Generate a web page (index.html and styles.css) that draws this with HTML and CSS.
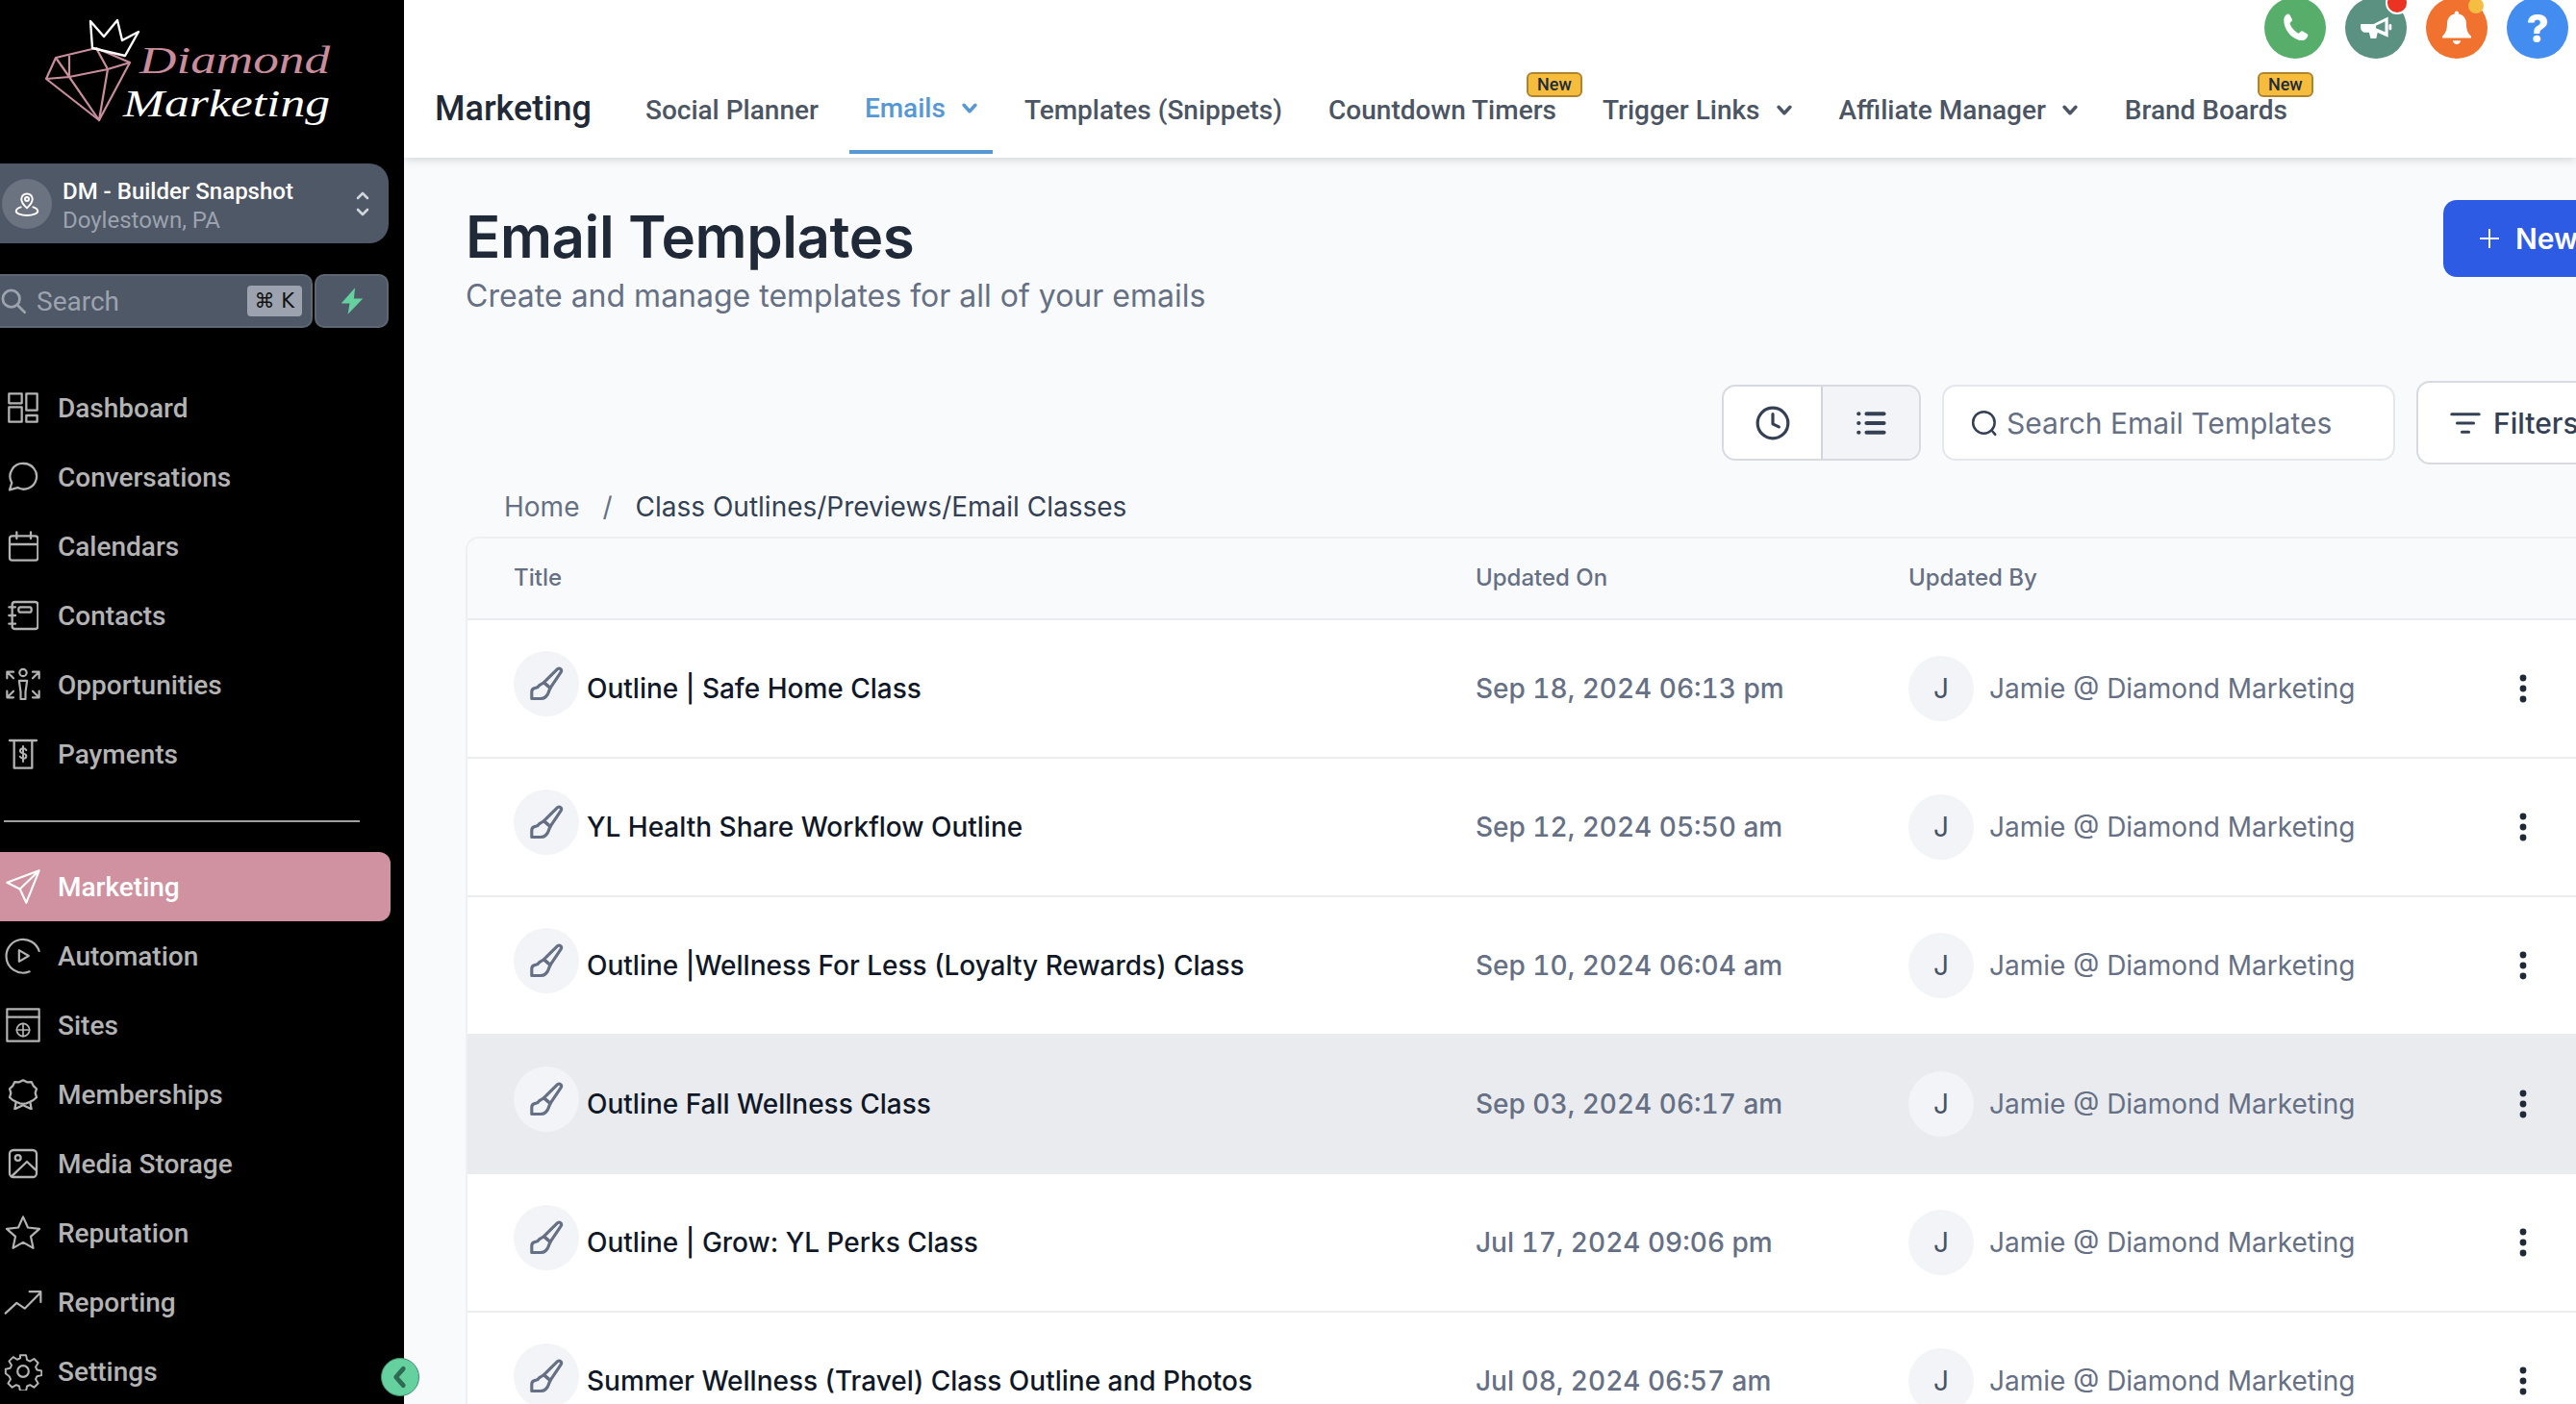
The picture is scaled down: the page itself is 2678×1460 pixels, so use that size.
FILE: index.html
```html
<!DOCTYPE html>
<html lang="en">
<head>
  <meta charset="UTF-8" />
  <meta name="viewport" content="width=device-width, initial-scale=1.0"/>
  <title>Email Templates</title>
  <link rel="stylesheet" href="styles.css">
</head>
<body>

<svg class="icon-defs">
  <symbol id="brush" viewBox="0 0 24 24" fill="none" stroke="currentColor" stroke-width="2" stroke-linejoin="round" stroke-linecap="round">
    <path d="M19.5 2.2c1.2-.8 2.9.6 2.2 2L14.6 14.8l-4.2-3.6z"/>
    <path d="M10.4 11.2l4.2 3.6-1 2.4c-.8 2.6-2.8 4.6-5.4 4.6H2.4v-4.4c0-1.4 1-2.4 2.4-2.6 1.2-.2 2-.8 2.6-1.8z"/>
  </symbol>
  <symbol id="dots" viewBox="0 0 8 30" fill="currentColor">
    <circle cx="4" cy="4" r="3.4"/><circle cx="4" cy="15" r="3.4"/><circle cx="4" cy="26" r="3.4"/>
  </symbol>
  <symbol id="chev" viewBox="0 0 16 12" fill="none" stroke="currentColor" stroke-width="3.2" stroke-linecap="round" stroke-linejoin="round">
    <path d="M2.5 3l5.5 6 5.5-6"/>
  </symbol>
</svg>

<aside class="sidebar">
  <div class="logo-wrapper">
    <svg class="logo" viewBox="0 0 300 112" width="300" height="112">
      <g fill="none" stroke="#c98d9c" stroke-width="2.2" stroke-linejoin="round">
        <path d="M1 62L11 40 53 30 88 45 56 105z"/>
        <path d="M1 62L25 60 65 52 88 45M11 40L25 60 56 105 65 52 53 30M25 38V60"/>
      </g>
      <path d="M49 30L47 2 61 18 75 1 80 22 97 13 83 38z" fill="none" stroke="#fff" stroke-width="2.4" stroke-linejoin="round"/>
      <text class="logo-top" x="98" y="56" textLength="198" lengthAdjust="spacingAndGlyphs">Diamond</text>
      <text class="logo-bottom" x="81" y="101" textLength="215" lengthAdjust="spacingAndGlyphs">Marketing</text>
    </svg>
  </div>

  <div class="location">
    <div class="location-avatar">
      <svg viewBox="0 0 24 24" width="30" height="30" fill="none" stroke="#fff" stroke-width="1.6" stroke-linejoin="round">
        <path d="M12 15.5c-3-2.8-4.6-5-4.6-7.400a4.600 4.600 0 0 1 9.200 0c0 2.400-1.600 4.600-4.600 7.400z"/>
        <circle cx="12" cy="8" r="1.600"/>
        <path d="M7.500 14.500c-2.600.8-4.500 2-4.500 3.500 0 2 4 3.500 9 3.500s9-1.500 9-3.500c0-1.500-1.900-2.700-4.500-3.500"/>
      </svg>
    </div>
    <div class="location-text">
      <div class="location-name">DM - Builder Snapshot</div>
      <div class="location-city">Doylestown, PA</div>
    </div>
    <svg class="location-arrows" viewBox="0 0 14 28" width="14" height="28" fill="none" stroke="#d1d5db" stroke-width="2.600" stroke-linecap="round" stroke-linejoin="round">
      <path d="M2 8l5-5 5 5M2 20l5 5 5-5"/>
    </svg>
  </div>

  <div class="search-row">
    <div class="side-search">
      <svg viewBox="0 0 24 24" width="28" height="28" fill="none" stroke="#9ca3af" stroke-width="2.400" stroke-linecap="round">
        <circle cx="10" cy="10" r="7.500"/><path d="M16 16l6 6"/>
      </svg>
      <span class="side-search-text">Search</span>
      <span class="kbd">⌘ K</span>
    </div>
    <div class="bolt-btn">
      <svg viewBox="0 0 24 24" width="30" height="30"><path d="M14.500 1L3 14h7l-1.500 9L21 10h-7.500z" fill="#65d19f"/></svg>
    </div>
  </div>

  <nav class="side-nav">
    <a class="nav-item">
      <svg viewBox="0 0 24 24"><rect x="1" y="1" width="10" height="7.500"/><rect x="14.500" y="1" width="8.500" height="13"/><rect x="1" y="11.500" width="10" height="11.500"/><rect x="14.500" y="18" width="8.500" height="5"/></svg>
      Dashboard
    </a>
    <a class="nav-item">
      <svg viewBox="0 0 24 24"><path d="M12.500 1.500a10 10 0 1 1-4.700 18.800L1.500 22l1.700-5.500A10 10 0 0 1 12.500 1.500z"/></svg>
      Conversations
    </a>
    <a class="nav-item">
      <svg viewBox="0 0 24 24"><rect x="1.500" y="4" width="22" height="19" rx="2"/><path d="M1.500 10.500h22M7 1v5M18 1v5"/></svg>
      Calendars
    </a>
    <a class="nav-item">
      <svg viewBox="0 0 24 24"><rect x="3.500" y="1.500" width="20" height="21" rx="2"/><rect x="8.500" y="5.500" width="10" height="4" rx="1.500"/><path d="M1 5.500h5M1 12h5M1 18.500h5"/></svg>
      Contacts
    </a>
    <a class="nav-item">
      <svg class="wide" viewBox="0 0 24 24"><circle cx="12" cy="4.500" r="2.200"/><path d="M9.500 9.500h5l-1 7v4.500h-3v-4.500z"/><path d="M2 4h4M2 4v4M2 4l4 4M22 4h-4M22 4v4M22 4l-4 4M2 20h4M2 20v-4M2 20l4-4M22 20h-4M22 20v-4M22 20l-4-4"/></svg>
      Opportunities
    </a>
    <a class="nav-item">
      <svg viewBox="0 0 24 24"><path d="M1.500 1.500h21M5 1.500V23h14V1.500"/><path d="M14.500 9c-.5-1-1.400-1.400-2.400-1.400-1.300 0-2.400.7-2.400 1.900 0 2.700 4.800 1.300 4.800 4.100 0 1.300-1.100 1.900-2.400 1.900-1 0-1.900-.5-2.500-1.400M12 6v12" stroke-width="1.500"/></svg>
      Payments
    </a>

    <div class="nav-divider"></div>

    <a class="nav-item active">
      <svg class="wide" viewBox="0 0 24 24"><path d="M22 2L2 9.500l8 4 4 8.500zM22 2L10 13.500"/></svg>
      Marketing
    </a>
    <a class="nav-item">
      <svg class="wide" viewBox="0 0 24 24"><path d="M22 9A10.500 10.500 0 0 0 1.500 12a10.500 10.500 0 0 0 14.500 9.800"/><path d="M9.500 8.500v7l6-3.500z"/></svg>
      Automation
    </a>
    <a class="nav-item">
      <svg class="wide" viewBox="0 0 24 24"><rect x="2" y="2" width="20" height="20"/><path d="M2 7h20"/><circle cx="12" cy="15" r="4" stroke-width="1"/><path d="M8 15h8M12 11v8" stroke-width="1"/></svg>
      Sites
    </a>
    <a class="nav-item">
      <svg viewBox="0 0 24 24"><path d="M12 1l3 1.500 3.500-.2 1.500 3 2.500 2.400-1 3.300 1 3.300-2.500 2.200-3 1.500-2.500 1-2.500.4-2.500-.4-2.500-1-3-1.500L1.500 14.300l1-3.300-1-3.300L4 5.300l1.500-3 3.500.2z"/><path d="M6.500 18l-1 5.500L12 20.500l6.500 3-1-5.500"/></svg>
      Memberships
    </a>
    <a class="nav-item">
      <svg viewBox="0 0 24 24"><rect x="1.500" y="1.500" width="21" height="21" rx="3"/><circle cx="8" cy="7.500" r="2.200"/><path d="M3 22L15 10.500l7.500 7"/></svg>
      Media Storage
    </a>
    <a class="nav-item">
      <svg class="wide" viewBox="0 0 24 24"><path d="M12 2l3 6.700 7.200.8-5.400 4.800 1.500 7.200-6.300-3.600-6.300 3.600 1.500-7.200-5.400-4.800 7.200-.8z"/></svg>
      Reputation
    </a>
    <a class="nav-item">
      <svg class="wide" viewBox="0 0 24 24"><path d="M1 19l7-6.500 5 3.500 10-10M16 5.500h7V12"/></svg>
      Reporting
    </a>
    <a class="nav-item">
      <svg class="wide" viewBox="0 0 24 24"><circle cx="12" cy="12" r="3.500"/><path d="M10 1h4l.7 3.200 2 .9 2.800-1.700 2.800 2.800-1.700 2.800.9 2 3.200.7v3l-3.200.7-.9 2 1.700 2.800-2.800 2.800-2.800-1.700-2 .9-.7 3.200h-4l-.7-3.200-2-.9-2.800 1.700-2.800-2.800 1.700-2.800-.9-2L0 13.500v-3l3.200-.7.900-2-1.700-2.800 2.800-2.800 2.800 1.700 2-.9z" transform="translate(1.100 1.100) scale(.91)"/></svg>
      Settings
    </a>
  </nav>

  <div class="collapse-btn">
    <svg viewBox="0 0 24 24" width="26" height="26" fill="none" stroke="#2f6b52" stroke-width="4.400" stroke-linecap="round" stroke-linejoin="round"><path d="M15 4l-7 8 7 8"/></svg>
  </div>
</aside>

<main class="main">
  <header class="topbar">
    <div class="quick-actions">
      <div class="circle-btn green">
        <svg viewBox="0 0 24 24" width="36" height="36"><path d="M6.500 2.500c.6-.3 1.300-.2 1.700.4l1.600 3c.3.500.2 1.200-.3 1.600L8.300 8.700c.8 2.900 3.300 5.800 6.200 7.200l1.300-1.300c.4-.4 1-.5 1.500-.2l3 1.700c.6.300.8 1 .5 1.600-.8 1.800-2 3-3.700 3C10.700 20.700 4 13.800 4.200 6.300c0-1.700 1-3 2.300-3.800z" fill="#fff"/></svg>
      </div>
      <div class="circle-btn teal">
        <svg viewBox="0 0 24 24" width="38" height="38" fill="#fff"><path d="M2 9.500h8.500L20 4.800v13.400l-7-3.200v.5l-.8 3.500H8.500l-1-4H5.200C3.400 15 2 13.600 2 11.800z"/><rect x="20.500" y="9.500" width="1.800" height="4" rx=".9"/><path d="M12 10.500l6-2.800v7l-6-2.500z" fill="#5b9180"/></svg>
        <span class="dot-red"></span>
      </div>
      <div class="circle-btn orange">
        <svg viewBox="0 0 24 24" width="40" height="40" fill="#fff"><path d="M12 1.500c.8 0 1.300.6 1.300 1.400v.4c3 .6 4.700 3 4.700 6 0 4 1 6 3 8v1H3v-1c2-2 3-4 3-8 0-3 1.700-5.400 4.700-6v-.4c0-.8.500-1.400 1.300-1.400z"/><path d="M9.500 20h5c-.2 1.300-1.200 2.200-2.500 2.200s-2.300-.9-2.500-2.200z"/></svg>
        <span class="dot-yellow"></span>
      </div>
      <div class="circle-btn blue">?</div>
    </div>

    <div class="subnav">
      <span class="section-title">Marketing</span>
      <a class="tab">Social Planner</a>
      <a class="tab tab-active">Emails <svg class="tab-chev"><use href="#chev"/></svg></a>
      <a class="tab">Templates (Snippets)</a>
      <a class="tab">Countdown Timers <span class="new-badge">New</span></a>
      <a class="tab">Trigger Links <svg class="tab-chev"><use href="#chev"/></svg></a>
      <a class="tab">Affiliate Manager <svg class="tab-chev"><use href="#chev"/></svg></a>
      <a class="tab">Brand Boards <span class="new-badge">New</span></a>
    </div>
  </header>

  <section class="content">
    <div class="page-header">
      <div class="page-heading">
        <h1>Email Templates</h1>
        <p class="page-sub">Create and manage templates for all of your emails</p>
      </div>
      <button class="new-btn">
        <svg viewBox="0 0 24 24" width="24" height="24" fill="none" stroke="#fff" stroke-width="2"><path d="M12 2v20M2 12h20"/></svg>
        New
      </button>
    </div>

    <div class="toolbar">
      <div class="view-toggle">
        <div class="view-btn">
          <svg viewBox="0 0 24 24" width="38" height="38" fill="none" stroke="#344054" stroke-width="2" stroke-linecap="round" stroke-linejoin="round"><circle cx="12" cy="12" r="10"/><path d="M12 6v6.500l4 2"/></svg>
        </div>
        <div class="view-btn selected">
          <svg viewBox="0 0 24 24" width="36" height="36" fill="none" stroke="#344054" stroke-width="2.800" stroke-linecap="round"><path d="M9 5.500h12M9 12h12M9 18.500h12M3.500 5.500h.1M3.500 12h.1M3.500 18.500h.1"/></svg>
        </div>
      </div>
      <div class="template-search">
        <svg viewBox="0 0 24 24" width="30" height="30" fill="none" stroke="#344054" stroke-width="2" stroke-linecap="round"><circle cx="11.500" cy="11.500" r="9"/><path d="M18 18l3 3.500"/></svg>
        <span>Search Email Templates</span>
      </div>
      <div class="filter-btn">
        <svg viewBox="0 0 24 24" width="34" height="34" fill="none" stroke="#344054" stroke-width="2.200" stroke-linecap="round"><path d="M2 5.500h20M6 12h12M9.500 18.500h5"/></svg>
        <span>Filters</span>
      </div>
    </div>

    <div class="breadcrumb">
      <span class="crumb-home">Home</span>
      <span class="crumb-sep">/</span>
      <span class="crumb-current">Class Outlines/Previews/Email Classes</span>
    </div>

    <div class="card">
      <div class="row head">
        <div>Title</div>
        <div>Updated On</div>
        <div>Updated By</div>
      </div>

      <div class="row">
        <div class="title-cell"><span class="brush"><svg><use href="#brush"/></svg></span><span class="name">Outline | Safe Home Class</span></div>
        <div class="date">Sep 18, 2024 06:13 pm</div>
        <div class="author"><span class="initial">J</span><span class="author-name">Jamie @ Diamond Marketing</span><svg class="more"><use href="#dots"/></svg></div>
      </div>
      <div class="row">
        <div class="title-cell"><span class="brush"><svg><use href="#brush"/></svg></span><span class="name">YL Health Share Workflow Outline</span></div>
        <div class="date">Sep 12, 2024 05:50 am</div>
        <div class="author"><span class="initial">J</span><span class="author-name">Jamie @ Diamond Marketing</span><svg class="more"><use href="#dots"/></svg></div>
      </div>
      <div class="row">
        <div class="title-cell"><span class="brush"><svg><use href="#brush"/></svg></span><span class="name">Outline |Wellness For Less (Loyalty Rewards) Class</span></div>
        <div class="date">Sep 10, 2024 06:04 am</div>
        <div class="author"><span class="initial">J</span><span class="author-name">Jamie @ Diamond Marketing</span><svg class="more"><use href="#dots"/></svg></div>
      </div>
      <div class="row hovered">
        <div class="title-cell"><span class="brush"><svg><use href="#brush"/></svg></span><span class="name">Outline Fall Wellness Class</span></div>
        <div class="date">Sep 03, 2024 06:17 am</div>
        <div class="author"><span class="initial">J</span><span class="author-name">Jamie @ Diamond Marketing</span><svg class="more"><use href="#dots"/></svg></div>
      </div>
      <div class="row">
        <div class="title-cell"><span class="brush"><svg><use href="#brush"/></svg></span><span class="name">Outline | Grow: YL Perks Class</span></div>
        <div class="date">Jul 17, 2024 09:06 pm</div>
        <div class="author"><span class="initial">J</span><span class="author-name">Jamie @ Diamond Marketing</span><svg class="more"><use href="#dots"/></svg></div>
      </div>
      <div class="row">
        <div class="title-cell"><span class="brush"><svg><use href="#brush"/></svg></span><span class="name">Summer Wellness (Travel) Class Outline and Photos</span></div>
        <div class="date">Jul 08, 2024 06:57 am</div>
        <div class="author"><span class="initial">J</span><span class="author-name">Jamie @ Diamond Marketing</span><svg class="more"><use href="#dots"/></svg></div>
      </div>
    </div>
  </section>
</main>

</body>
</html>
```

FILE: styles.css
```css
* { box-sizing: border-box; }
html, body { height: 100%; }
body {
  margin: 0;
  display: flex;
  height: 1460px;
  overflow: hidden;
  background: #f9fafb;
  font-family: Inter, sans-serif;
}
.icon-defs { display: none; }

/* sidebar */
.sidebar {
  position: relative;
  flex: 0 0 420px;
  width: 420px;
  background: #000;
  font-family: Roboto, sans-serif;
}
.logo-wrapper { height: 170px; padding: 20px 0 0 47px; }
.logo { display: block; }
.logo-top, .logo-bottom {
  font-family: "Liberation Serif", serif;
  font-style: italic;
  font-size: 41px;
}
.logo-top { fill: #c98d9c; }
.logo-bottom { fill: #fff; }

.location {
  display: flex;
  align-items: center;
  width: 404px;
  height: 83px;
  padding: 0 20px 0 2px;
  background: #4f5866;
  border-radius: 0 20px 20px 0;
}
.location-avatar {
  display: flex;
  align-items: center;
  justify-content: center;
  width: 52px;
  height: 52px;
  border-radius: 50%;
  background: #6b7280;
}
.location-text { flex: 1; margin-left: 11px; padding-top: 4px; font-size: 24px; line-height: 30px; }
.location-name { color: #fff; font-weight: 500; }
.location-city { color: #9ca3af; }

.search-row { display: flex; gap: 2px; width: 404px; margin-top: 32px; }
.side-search {
  display: flex;
  align-items: center;
  flex: 1;
  height: 56px;
  padding: 0 9px 0 0;
  background: #4f5866;
  border: 2px solid #5d6673;
  border-left: 0;
  border-radius: 0 10px 10px 0;
}
.side-search-text { flex: 1; margin-left: 10px; font-size: 28px; color: #9ca3af; }
.kbd {
  padding: 0 8px;
  height: 32px;
  line-height: 32px;
  border-radius: 4px;
  background: #9ca3af;
  color: #111;
  font-family: "DejaVu Sans", sans-serif;
  font-size: 21px;
}
.bolt-btn {
  display: flex;
  align-items: center;
  justify-content: center;
  width: 77px;
  height: 56px;
  background: #4f5866;
  border: 2px solid #5d6673;
  border-radius: 10px;
}

.side-nav { margin-top: 47px; }
.nav-item {
  display: flex;
  align-items: center;
  gap: 20px;
  height: 72px;
  padding-left: 8px;
  color: #b3b3b3;
  font-size: 28px;
  font-weight: 500;
}
.nav-item svg {
  flex: none;
  width: 32px;
  height: 32px;
  fill: none;
  stroke: currentColor;
  stroke-width: 1.7;
  stroke-linecap: round;
  stroke-linejoin: round;
}
.nav-item svg.wide {
  width: 40px;
  height: 40px;
  margin: 0 -4px;
  stroke-width: 1.3;
}
.nav-item.active {
  width: 406px;
  background: #d092a1;
  border-radius: 0 12px 12px 0;
  color: #fff;
}
.nav-divider { width: 370px; height: 2px; margin: 33px 0 31px 4px; background: #a0a0a0; }

.collapse-btn {
  position: absolute;
  left: 396px;
  top: 1412px;
  display: flex;
  align-items: center;
  justify-content: center;
  width: 40px;
  height: 40px;
  border-radius: 50%;
  background: #65d19f;
  border: 1px solid #3f8f6c;
}

/* top bar */
.main { flex: 1; min-width: 0; overflow: hidden; }
.topbar {
  height: 164px;
  background: #fff;
  box-shadow: 0 2px 9px rgba(70, 85, 100, .22);
  position: relative;
}
.quick-actions {
  display: flex;
  justify-content: flex-end;
  gap: 20px;
  height: 61px;
  padding-right: 8px;
  transform: translateY(-3px);
}
.circle-btn {
  position: relative;
  display: flex;
  align-items: center;
  justify-content: center;
  width: 64px;
  height: 64px;
  border-radius: 50%;
  color: #fff;
  font-size: 40px;
  font-weight: 800;
}
.green { background: #57ae6b; }
.teal { background: #5b9180; }
.orange { background: #f0722e; }
.blue { background: #438cf0; }
.dot-red {
  position: absolute;
  left: 42px;
  top: -6px;
  width: 24px;
  height: 24px;
  border-radius: 50%;
  background: #ea3323;
  border: 2px solid #fff;
}
.dot-yellow {
  position: absolute;
  left: 44px;
  top: 1px;
  width: 16px;
  height: 16px;
  border-radius: 50%;
  background: #f5bd41;
}

.subnav {
  display: flex;
  align-items: center;
  height: 103px;
  padding: 0 0 0 32px;
  font-family: Roboto, sans-serif;
}
.section-title {
  margin-right: 56px;
  color: #1f2937;
  font-size: 36px;
  font-weight: 500;
  line-height: 40px;
}
.tab {
  position: relative;
  display: flex;
  align-items: center;
  gap: 16px;
  margin: 4px 48px 0 0;
  color: #4b5563;
  font-size: 28px;
  font-weight: 500;
  line-height: 36px;
}
.tab-chev { width: 18px; height: 13px; }
.tab-active {
  color: #5598d4;
  margin: 0 33px 0 -16px;
  padding: 0 15px 0 16px;
  align-self: stretch;
}
.tab-active::after {
  content: "";
  position: absolute;
  left: 0;
  right: 0;
  bottom: 4px;
  height: 4px;
  background: #5598d4;
}
.new-badge {
  position: absolute;
  right: -27px;
  top: -22px;
  width: 58px;
  height: 26px;
  border: 2px solid #ae8430;
  border-radius: 6px;
  background: #f6bc3c;
  color: #1d2b3a;
  font-size: 18px;
  line-height: 21px;
  text-align: center;
}

/* page content */
.content { width: 2360px; padding: 44px 64px 0; }
.page-header { display: flex; justify-content: space-between; }
.page-heading { padding-top: 2px; }
h1 {
  margin: 0;
  color: #1f2937;
  font-size: 60px;
  font-weight: 600;
  line-height: 72px;
  letter-spacing: -.4px;
}
.page-sub { margin: 10px 0 0; color: #667085; font-size: 32px; line-height: 32px; }
.new-btn {
  display: flex;
  align-items: center;
  gap: 15px;
  width: 176px;
  height: 80px;
  padding: 0 0 0 36px;
  border: 0;
  border-radius: 14px;
  background: #2d5be3;
  color: #fff;
  font-family: Inter, sans-serif;
  font-size: 30px;
  font-weight: 600;
}

.toolbar {
  display: flex;
  justify-content: flex-end;
  align-items: center;
  gap: 22px;
  margin-top: 72px;
}
.view-toggle {
  display: flex;
  width: 207px;
  height: 79px;
  background: #fff;
  border: 2px solid #d7dae0;
  border-radius: 14px;
  overflow: hidden;
}
.view-btn { display: flex; align-items: center; justify-content: center; flex: 0 0 101px; }
.view-btn.selected { flex: 1; background: #f2f4f7; border-left: 2px solid #d0d5dd; }
.template-search {
  display: flex;
  align-items: center;
  gap: 8px;
  width: 471px;
  height: 79px;
  padding-left: 27px;
  background: #fff;
  border: 2px solid #e4e7ec;
  border-radius: 14px;
  color: #667085;
  font-size: 30px;
}
.filter-btn {
  display: flex;
  align-items: center;
  gap: 12px;
  width: 204px;
  height: 87px;
  padding-left: 32px;
  background: #fff;
  border: 2px solid #d7dae0;
  border-radius: 14px;
  color: #344054;
  font-size: 30px;
  font-weight: 500;
}

.breadcrumb {
  display: flex;
  align-items: center;
  height: 40px;
  margin-top: 24px;
  padding-left: 40px;
  font-size: 28px;
}
.crumb-home { color: #667085; }
.crumb-sep { margin: 0 24px; color: #667085; }
.crumb-current { color: #344054; }

.card {
  margin-top: 11px;
  background: #fff;
  border: 2px solid #eef0f3;
  border-bottom: 0;
  border-right: 0;
  border-radius: 14px 0 0 0;
  overflow: hidden;
}
.row {
  display: grid;
  grid-template-columns: 1000px 450px 1fr;
  align-items: center;
  height: 144px;
  padding-left: 48px;
  background: #fff;
  border-bottom: 2px solid #eaecf0;
}
.row.head {
  height: 85px;
  padding-bottom: 2px;
  background: #f9fafb;
  color: #667085;
  font-size: 24px;
  font-weight: 500;
}
.row.hovered { background: #e9ebef; }
.title-cell { display: flex; align-items: center; gap: 8px; }
.brush {
  display: flex;
  align-items: center;
  justify-content: center;
  width: 68px;
  height: 68px;
  margin-top: -10px;
  border-radius: 50%;
  background: #f2f4f7;
  color: #667085;
}
.brush svg { width: 38px; height: 38px; }
.name { color: #101828; font-size: 28px; font-weight: 500; }
.date {
  color: #667085;
  font-size: 28px;
  font-weight: 500;
  font-variant-numeric: tabular-nums;
}
.author { display: flex; align-items: center; }
.initial {
  display: flex;
  align-items: center;
  justify-content: center;
  flex: none;
  width: 68px;
  height: 68px;
  border-radius: 50%;
  background: #f2f4f7;
  color: #475467;
  font-size: 28px;
}
.author-name { margin-left: 16px; color: #667085; font-size: 28px; }
.more { width: 8px; height: 30px; margin-left: 171px; color: #1f2937; }
```
